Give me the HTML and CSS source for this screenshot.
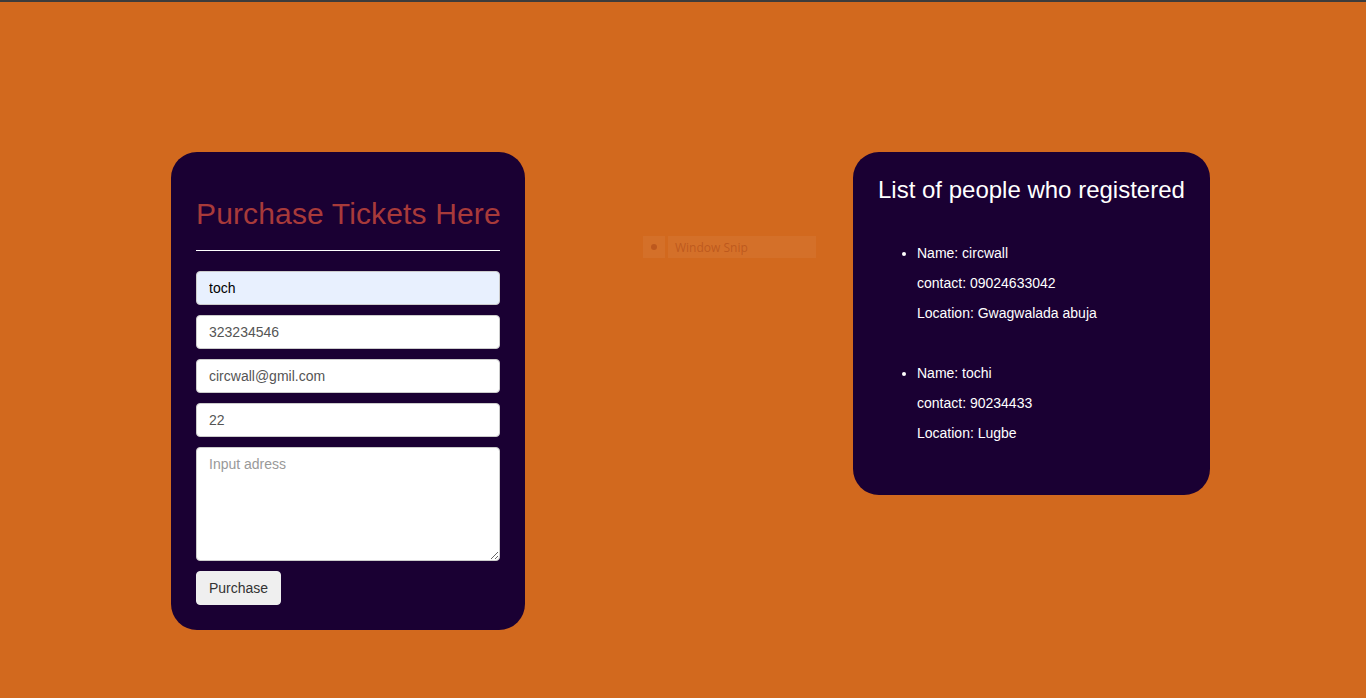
FILE: index.html
```html
<!DOCTYPE html>
<html lang="en">
<head>
<meta charset="utf-8">
<title>Tickets</title>
<link rel="stylesheet" href="styles.css">
</head>
<body>
<main class="page">
  <section class="card form-card">
    <h1 class="form-title">Purchase Tickets Here</h1>
    <hr class="rule">
    <form class="ticket-form">
      <input class="field field-filled" type="text" value="toch">
      <input class="field" type="text" value="323234546">
      <input class="field" type="email" value="circwall@gmil.com">
      <input class="field" type="text" value="22">
      <textarea class="field area" placeholder="Input adress"></textarea>
      <div class="actions"><button class="btn" type="button">Purchase</button></div>
    </form>
  </section>

  <div class="snip">
    <span class="snip-icon"><span class="snip-dot"></span></span>
    <span class="snip-text">Window Snip</span>
  </div>

  <section class="card list-card">
    <h2 class="list-title">List of people who registered</h2>
    <ul class="people">
      <li class="person">
        <p>Name: circwall</p>
        <p>contact: 09024633042</p>
        <p>Location: Gwagwalada abuja</p>
      </li>
      <li class="person">
        <p>Name: tochi</p>
        <p>contact: 90234433</p>
        <p>Location: Lugbe</p>
      </li>
    </ul>
  </section>
</main>
</body>
</html>
```

FILE: styles.css
```css
html, body {
  margin: 0;
  padding: 0;
}
body {
  background: #d2691e;
  border-top: 2px solid #3c3c3c;
  font-family: "Liberation Sans", Arial, sans-serif;
  min-height: 696px;
}
.page {
  display: flex;
  align-items: flex-start;
  padding: 150px 0 0 171px;
}
.card {
  background: #1a0033;
  border-radius: 26px;
}
.form-card {
  width: 304px;
  padding: 25px;
  flex: none;
}
.form-title {
  margin: 20px 0 19px;
  font-size: 30px;
  line-height: 34px;
  font-weight: normal;
  letter-spacing: 0.14px;
  white-space: nowrap;
  color: #a83a3a;
}
.rule {
  border: 0;
  height: 1px;
  background: #ffffff;
  margin: 0 0 20px;
}
.ticket-form {
  display: flex;
  flex-direction: column;
  gap: 10px;
}
.field {
  box-sizing: border-box;
  width: 100%;
  height: 34px;
  margin: 0;
  border: 1px solid #cccccc;
  border-radius: 4px;
  padding: 0 12px;
  background: #ffffff;
  color: #555555;
  font-family: "Liberation Sans", Arial, sans-serif;
  font-size: 14px;
}
.field-filled {
  background: #e8f0fe;
  color: #000000;
}
.area {
  height: 114px;
  padding: 8px 12px;
  line-height: 16px;
  resize: vertical;
}
.area::placeholder {
  color: #999999;
}
.actions {
  display: flex;
}
.btn {
  height: 34px;
  padding: 0 12px;
  border: 1px solid #efefef;
  border-radius: 4px;
  background: #efefef;
  color: #333333;
  font-family: "Liberation Sans", Arial, sans-serif;
  font-size: 14px;
}
.snip {
  flex: none;
  display: flex;
  align-items: stretch;
  gap: 3px;
  width: 173px;
  height: 22px;
  margin: 84px 0 0 118px;
}
.snip-icon {
  width: 22px;
  display: flex;
  align-items: center;
  justify-content: center;
  background: rgba(255, 255, 255, 0.05);
}
.snip-dot {
  width: 6px;
  height: 6px;
  border-radius: 50%;
  background: rgba(170, 70, 20, 0.55);
}
.snip-text {
  flex: 1;
  display: flex;
  align-items: center;
  padding-left: 7px;
  background: rgba(255, 255, 255, 0.05);
  font-family: "Open Sans", "Noto Sans", sans-serif;
  font-size: 12px;
  color: rgba(170, 70, 20, 0.55);
}
.list-card {
  flex: none;
  margin-left: 37px;
  padding: 24px 25px;
  color: #ffffff;
}
.list-title {
  margin: 0;
  font-size: 24px;
  line-height: 27px;
  font-weight: normal;
  text-align: center;
  white-space: nowrap;
}
.people {
  margin: 42px 0 30px;
  padding-left: 39px;
  font-size: 14px;
  line-height: 16px;
}
.person p {
  margin: 0;
}
.person p + p {
  margin-top: 14px;
}
.person + .person {
  margin-top: 44px;
}
```
